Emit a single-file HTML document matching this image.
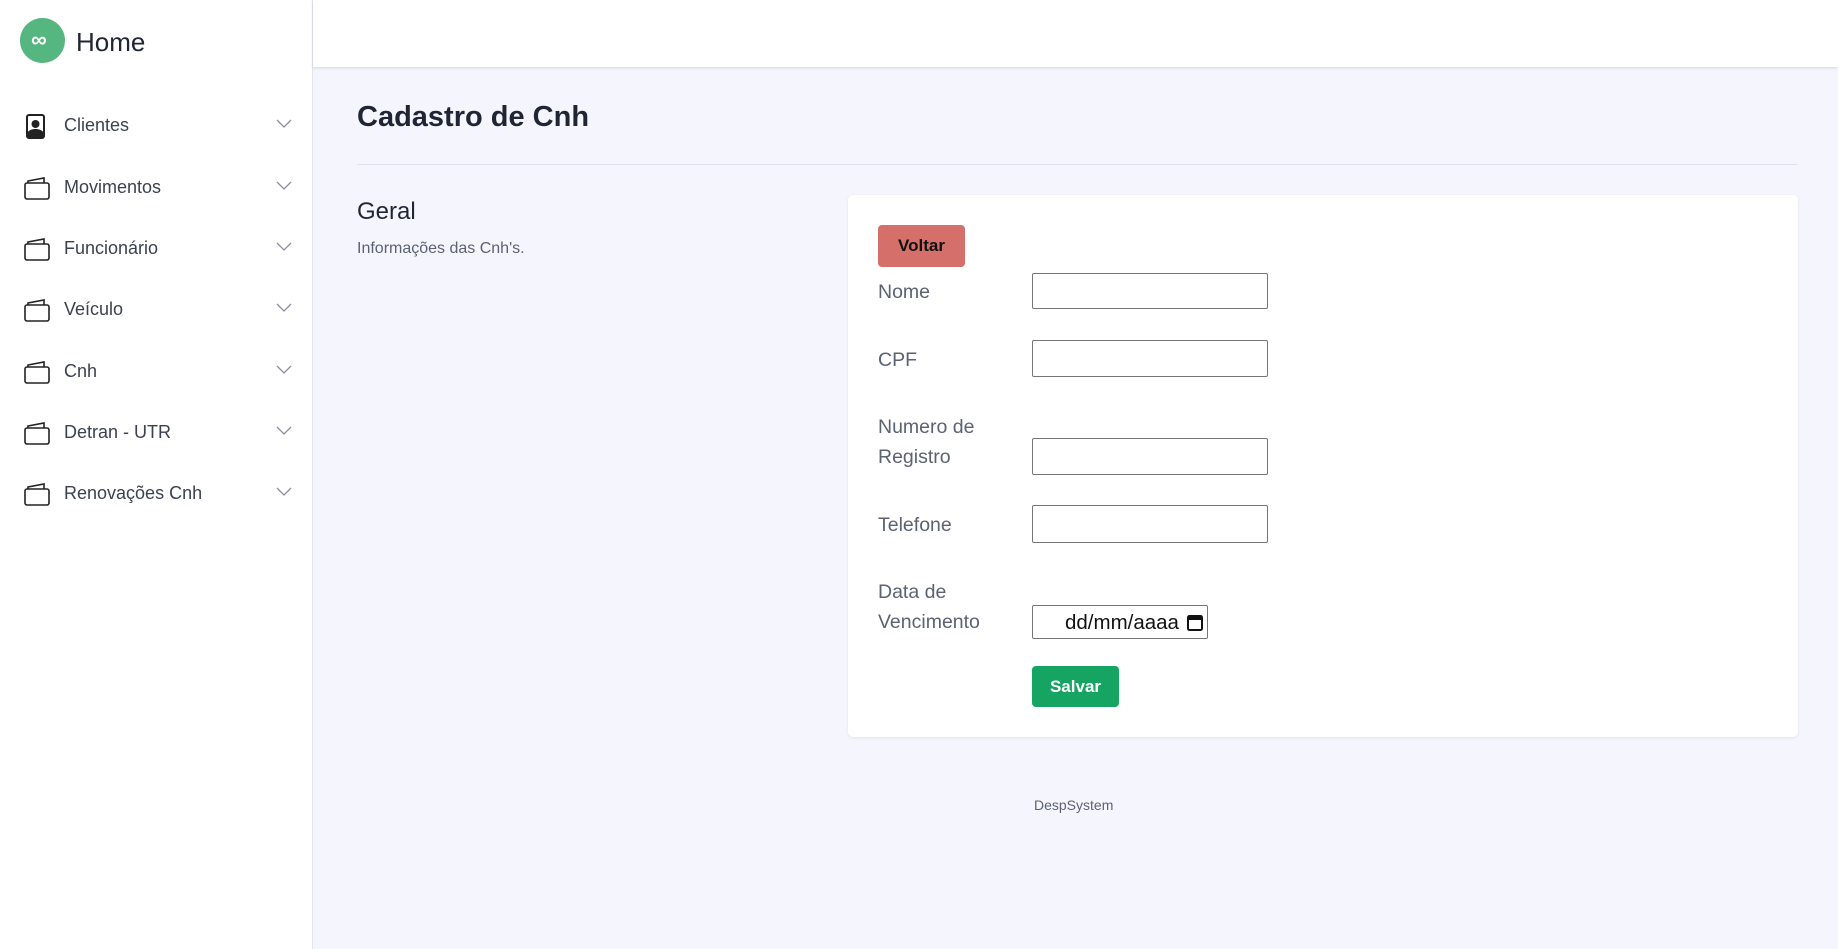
<!DOCTYPE html>
<html><head><meta charset="utf-8"><style>
*{margin:0;padding:0;box-sizing:border-box}
body{width:1838px;height:949px;background:#f5f6fd;font-family:"Liberation Sans",sans-serif;position:relative;overflow:hidden;color:#1f2532}
.a{position:absolute;white-space:nowrap}
#side{position:absolute;left:0;top:0;width:313px;height:949px;background:#fff;border-right:1px solid #e3e5ec}
#top{position:absolute;left:313px;top:0;right:0;height:67px;background:#fff;box-shadow:0 1px 3px rgba(0,0,0,.12)}
.mi{position:absolute;left:0;width:313px;height:30px}
.mi span{position:absolute;left:64px;top:4px;font-size:18px;color:#3b4150}
.mi svg.i{position:absolute;left:24px;top:3px}
.mi svg.c{position:absolute;left:276px;top:8px}
.lbl{position:absolute;left:878px;font-size:19.5px;color:#5b6272;line-height:30px}
.in{position:absolute;left:1032px;width:236px;height:37px;border:1px solid #767676;border-radius:2px;background:#fff}
</style></head><body>
<div id="side">
<div class="a" style="left:20px;top:18px;width:45px;height:45px;border-radius:50%;background:#55b67f"></div>
<div class="a" style="left:31px;top:29px;color:#fff;font-size:22px;font-weight:bold;line-height:22px">∞</div>
<div class="a" style="left:76px;top:27px;font-size:26px;color:#1f2532">Home</div>
</div>
<div id="top"></div>

<div class="mi" style="top:111px"><svg class="i" width="22" height="26" viewBox="0 0 22 26"><rect x="3" y="1" width="17" height="23" rx="2" fill="none" stroke="#222" stroke-width="2"/><circle cx="11.5" cy="10" r="4" fill="#222"/><path d="M3 24v-5c2-3 5-4 8.5-4s6.5 1 8.5 4v5z" fill="#222"/></svg><span>Clientes</span><svg class="c" width="16" height="10"><path d="M1 1l7 7 7-7" fill="none" stroke="#8a90a0" stroke-width="1.3"/></svg></div>
<div class="mi" style="top:173px"><svg class="i" width="26" height="26" viewBox="0 0 26 26"><rect x="1" y="7" width="24" height="16" rx="2" fill="none" stroke="#222" stroke-width="1.6"/><path d="M4 7V5l16-3v5" fill="none" stroke="#222" stroke-width="1.6"/></svg><span>Movimentos</span><svg class="c" width="16" height="10"><path d="M1 1l7 7 7-7" fill="none" stroke="#8a90a0" stroke-width="1.3"/></svg></div>
<div class="mi" style="top:234px"><svg class="i" width="26" height="26" viewBox="0 0 26 26"><rect x="1" y="7" width="24" height="16" rx="2" fill="none" stroke="#222" stroke-width="1.6"/><path d="M4 7V5l16-3v5" fill="none" stroke="#222" stroke-width="1.6"/></svg><span>Funcionário</span><svg class="c" width="16" height="10"><path d="M1 1l7 7 7-7" fill="none" stroke="#8a90a0" stroke-width="1.3"/></svg></div>
<div class="mi" style="top:295px"><svg class="i" width="26" height="26" viewBox="0 0 26 26"><rect x="1" y="7" width="24" height="16" rx="2" fill="none" stroke="#222" stroke-width="1.6"/><path d="M4 7V5l16-3v5" fill="none" stroke="#222" stroke-width="1.6"/></svg><span>Veículo</span><svg class="c" width="16" height="10"><path d="M1 1l7 7 7-7" fill="none" stroke="#8a90a0" stroke-width="1.3"/></svg></div>
<div class="mi" style="top:357px"><svg class="i" width="26" height="26" viewBox="0 0 26 26"><rect x="1" y="7" width="24" height="16" rx="2" fill="none" stroke="#222" stroke-width="1.6"/><path d="M4 7V5l16-3v5" fill="none" stroke="#222" stroke-width="1.6"/></svg><span>Cnh</span><svg class="c" width="16" height="10"><path d="M1 1l7 7 7-7" fill="none" stroke="#8a90a0" stroke-width="1.3"/></svg></div>
<div class="mi" style="top:418px"><svg class="i" width="26" height="26" viewBox="0 0 26 26"><rect x="1" y="7" width="24" height="16" rx="2" fill="none" stroke="#222" stroke-width="1.6"/><path d="M4 7V5l16-3v5" fill="none" stroke="#222" stroke-width="1.6"/></svg><span>Detran - UTR</span><svg class="c" width="16" height="10"><path d="M1 1l7 7 7-7" fill="none" stroke="#8a90a0" stroke-width="1.3"/></svg></div>
<div class="mi" style="top:479px"><svg class="i" width="26" height="26" viewBox="0 0 26 26"><rect x="1" y="7" width="24" height="16" rx="2" fill="none" stroke="#222" stroke-width="1.6"/><path d="M4 7V5l16-3v5" fill="none" stroke="#222" stroke-width="1.6"/></svg><span>Renovações Cnh</span><svg class="c" width="16" height="10"><path d="M1 1l7 7 7-7" fill="none" stroke="#8a90a0" stroke-width="1.3"/></svg></div>

<div class="a" style="left:357px;top:101px;font-size:29px;font-weight:bold;color:#1f2532">Cadastro de Cnh</div>
<div class="a" style="left:357px;top:164px;width:1441px;height:1px;background:#e1e3ec"></div>
<div class="a" style="left:357px;top:198px;font-size:24px;color:#1f2532">Geral</div>
<div class="a" style="left:357px;top:240px;font-size:16px;color:#5b6272">Informações das Cnh's.</div>

<div class="a" style="left:848px;top:195px;width:950px;height:542px;background:#fff;border-radius:5px;box-shadow:0 1px 3px rgba(0,0,0,.08)"></div>
<div class="a" style="left:878px;top:225px;width:87px;height:42px;background:#d46f6a;border-radius:4px;font-size:17px;font-weight:bold;color:#111;text-align:center;line-height:42px">Voltar</div>
<div class="lbl" style="top:277px">Nome</div><div class="in" style="top:273px;height:36px"></div>
<div class="lbl" style="top:345px">CPF</div><div class="in" style="top:340px"></div>
<div class="lbl" style="top:412px">Numero de<br>Registro</div><div class="in" style="top:438px"></div>
<div class="lbl" style="top:510px">Telefone</div><div class="in" style="top:505px;height:38px"></div>
<div class="lbl" style="top:577px">Data de<br>Vencimento</div>
<div class="in" style="top:605px;width:176px;height:34px"><span class="a" style="left:32px;top:5px;font-size:20.5px;color:#111">dd/mm/aaaa</span><svg class="a" style="left:154px;top:8px" width="16" height="17" viewBox="0 0 16 17"><rect x="1" y="2" width="14" height="14" rx="1.5" fill="none" stroke="#111" stroke-width="2"/><rect x="1" y="2" width="14" height="4" fill="#111"/></svg></div>
<div class="a" style="left:1032px;top:666px;width:87px;height:41px;background:#16a462;border-radius:4px;font-size:17px;font-weight:bold;color:#fff;text-align:center;line-height:41px">Salvar</div>
<div class="a" style="left:1034px;top:797px;font-size:14px;color:#5b6272">DespSystem</div>
</body></html>
